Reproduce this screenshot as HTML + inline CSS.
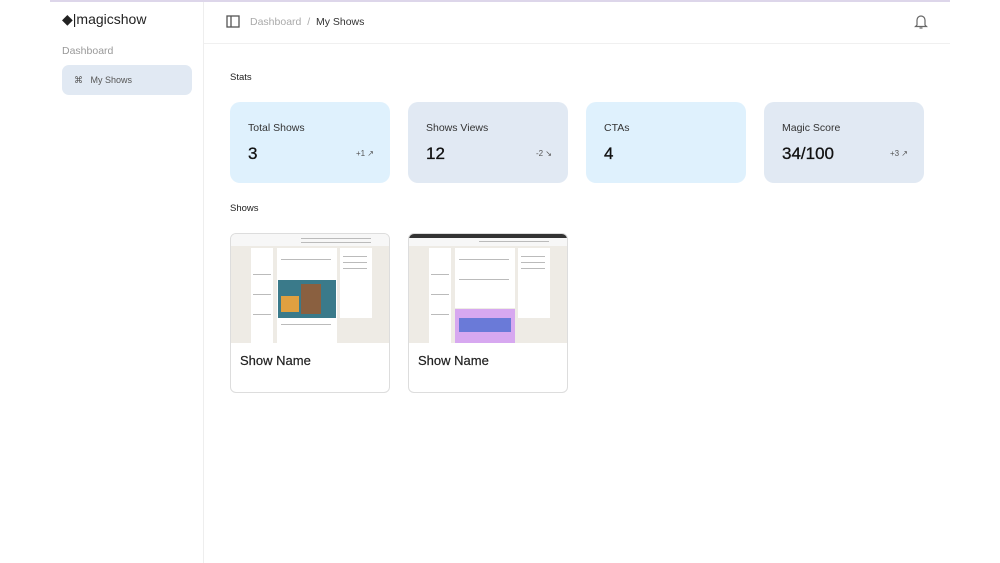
<!DOCTYPE html>
<html><head><style>
*{margin:0;padding:0;box-sizing:border-box}
body{width:1000px;height:563px;background:#fff;font-family:"Liberation Sans",sans-serif;position:relative;overflow:hidden;color:#111}
.abs{position:absolute}
.card{position:absolute;top:102px;width:160px;height:81px;border-radius:10px}
.card .t{position:absolute;left:18px;top:20px;font-size:10.5px;color:#333}
.card .v{position:absolute;left:18px;top:42px;font-size:17px;color:#111;font-weight:500;-webkit-text-stroke:0.3px #111}
.card .d{position:absolute;right:16px;top:47px;font-size:8px;color:#555}
.show{position:absolute;top:233px;width:160px;height:160px;border:1px solid #ddd;border-radius:6px;overflow:hidden;background:#fff}
.thumb{position:absolute;left:0;top:0;width:160px;height:109px;background:#eeebe5}
.show .n{position:absolute;left:9px;top:119px;font-size:13px;color:#222;-webkit-text-stroke:0.2px #222}
.col{position:absolute;background:#fff}
.ln{position:absolute;height:1px;background:#bbb}
</style></head><body>
<div class="abs" style="left:50px;top:0;width:900px;height:2px;background:#ddd6ea"></div>
<div class="abs" style="left:203px;top:2px;width:1px;height:561px;background:#eee"></div>
<div class="abs" style="left:204px;top:43px;width:746px;height:1px;background:#f0f0f0"></div>
<div class="abs" style="left:62px;top:11px;font-size:14px;color:#222">◆|magicshow</div>
<div class="abs" style="left:62px;top:45px;font-size:10.5px;color:#999">Dashboard</div>
<div class="abs" style="left:62px;top:65px;width:130px;height:30px;background:#e1e9f3;border-radius:7px"></div>
<div class="abs" style="left:74px;top:75px;font-size:9px;color:#555">⌘&nbsp;&nbsp;&nbsp;My Shows</div>
<svg class="abs" style="left:226px;top:15px" width="14" height="13"><rect x="1" y="1" width="12" height="11" fill="none" stroke="#555" stroke-width="1.3"/><line x1="5" y1="1" x2="5" y2="12" stroke="#555" stroke-width="1.3"/></svg>
<div class="abs" style="left:250px;top:16px;font-size:10.5px;color:#aaa">Dashboard&nbsp;&nbsp;/&nbsp;&nbsp;<span style="color:#333">My Shows</span></div>
<svg class="abs" style="left:914px;top:14px" width="14" height="16"><path d="M3 11V6a4 4 0 0 1 8 0v5l1.5 1.5h-11z" fill="none" stroke="#666" stroke-width="1.2"/><path d="M5.5 14h3" stroke="#666" stroke-width="1.2"/></svg>
<div class="abs" style="left:230px;top:72px;font-size:9.5px;color:#222">Stats</div>
<div class="card" style="left:230px;background:#dff1fd"><div class="t">Total Shows</div><div class="v">3</div><div class="d">+1 ↗</div></div>
<div class="card" style="left:408px;background:#e1e9f3"><div class="t">Shows Views</div><div class="v">12</div><div class="d">-2 ↘</div></div>
<div class="card" style="left:586px;background:#dff1fd"><div class="t">CTAs</div><div class="v">4</div></div>
<div class="card" style="left:764px;background:#e1e9f3"><div class="t">Magic Score</div><div class="v">34/100</div><div class="d">+3 ↗</div></div>
<div class="abs" style="left:230px;top:203px;font-size:9.5px;color:#222">Shows</div>
<div class="show" style="left:230px"><div class="thumb">
<div class="col" style="left:0;top:0;width:160px;height:12px;background:#f7f7f7"></div>
<div class="ln" style="left:70px;top:4px;width:70px"></div><div class="ln" style="left:70px;top:8px;width:70px"></div>
<div class="col" style="left:20px;top:14px;width:22px;height:95px"></div>
<div class="col" style="left:46px;top:14px;width:60px;height:95px"></div>
<div class="col" style="left:109px;top:14px;width:32px;height:70px"></div>
<div class="ln" style="left:112px;top:22px;width:24px"></div><div class="ln" style="left:112px;top:28px;width:24px"></div><div class="ln" style="left:112px;top:34px;width:24px"></div>
<div class="ln" style="left:22px;top:40px;width:18px"></div><div class="ln" style="left:22px;top:60px;width:18px"></div><div class="ln" style="left:22px;top:80px;width:18px"></div>
<div class="ln" style="left:50px;top:25px;width:50px"></div><div class="ln" style="left:50px;top:90px;width:50px"></div>
<div class="col" style="left:47px;top:46px;width:58px;height:38px;background:#3a7a8a"></div>
<div class="col" style="left:70px;top:50px;width:20px;height:30px;background:#8a6040"></div>
<div class="col" style="left:50px;top:62px;width:18px;height:16px;background:#e0a040"></div>
</div><div class="n">Show Name</div></div>
<div class="show" style="left:408px"><div class="thumb">
<div class="col" style="left:0;top:0;width:160px;height:4px;background:#333"></div>
<div class="col" style="left:0;top:4px;width:160px;height:8px;background:#f7f7f7"></div>
<div class="ln" style="left:70px;top:7px;width:70px"></div>
<div class="col" style="left:20px;top:14px;width:22px;height:95px"></div>
<div class="col" style="left:46px;top:14px;width:60px;height:60px"></div>
<div class="col" style="left:109px;top:14px;width:32px;height:70px"></div>
<div class="ln" style="left:112px;top:22px;width:24px"></div><div class="ln" style="left:112px;top:28px;width:24px"></div><div class="ln" style="left:112px;top:34px;width:24px"></div>
<div class="ln" style="left:22px;top:40px;width:18px"></div><div class="ln" style="left:22px;top:60px;width:18px"></div><div class="ln" style="left:22px;top:80px;width:18px"></div>
<div class="ln" style="left:50px;top:25px;width:50px"></div><div class="ln" style="left:50px;top:45px;width:50px"></div>
<div class="col" style="left:46px;top:75px;width:60px;height:34px;background:#d7a8f0"></div>
<div class="col" style="left:50px;top:84px;width:52px;height:14px;background:#6a7ad8"></div>
</div><div class="n">Show Name</div></div>
</body></html>
